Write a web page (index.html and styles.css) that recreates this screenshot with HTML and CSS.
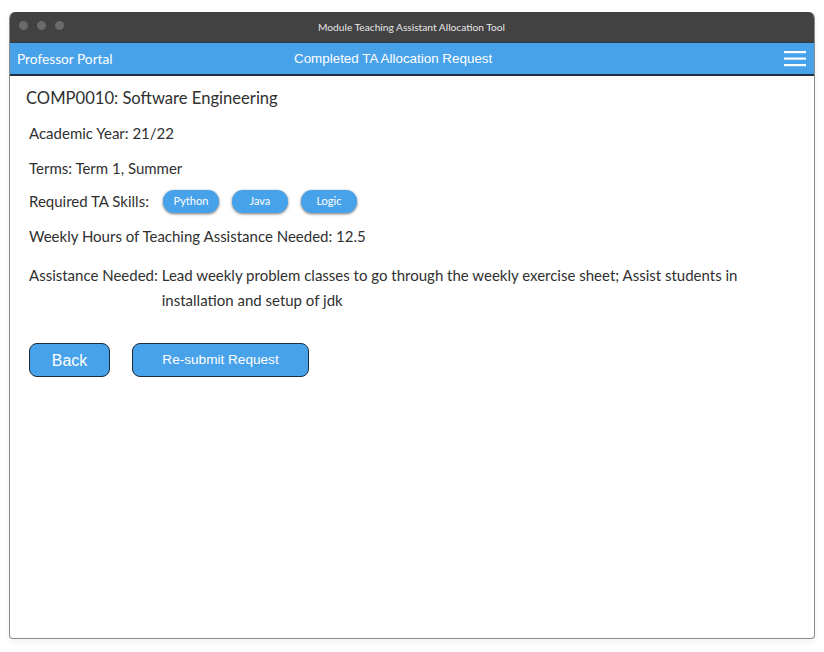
FILE: index.html
```html
<!DOCTYPE html>
<html>
<head>
<meta charset="utf-8">
<link rel="stylesheet" href="styles.css">
</head>
<body>
<div class="window">
  <div class="titlebar">
    <div class="dots"><span class="dot"></span><span class="dot"></span><span class="dot"></span></div>
    <div class="wintitle">Module Teaching Assistant Allocation Tool</div>
  </div>
  <div class="navbar">
    <div class="portal">Professor Portal</div>
    <div class="pagetitle">Completed TA Allocation Request</div>
    <div class="menu">
      <svg width="22" height="16" viewBox="0 0 22 16"><rect x="0" y="0" width="22" height="2.2" fill="#fff"/><rect x="0" y="6.5" width="22" height="2.2" fill="#fff"/><rect x="0" y="13" width="22" height="2.2" fill="#fff"/></svg>
    </div>
  </div>
  <div class="content">
    <h1 class="heading">COMP0010: Software Engineering</h1>
    <div class="row year">Academic Year: 21/22</div>
    <div class="row terms">Terms: Term 1, Summer</div>
    <div class="row skills">
      <span>Required TA Skills:</span>
      <span class="pill">Python</span>
      <span class="pill">Java</span>
      <span class="pill">Logic</span>
    </div>
    <div class="row hours">Weekly Hours of Teaching Assistance Needed: 12.5</div>
    <div class="row assist">
      <span class="label">Assistance Needed:</span>
      <span class="value">Lead weekly problem classes to go through the weekly exercise sheet; Assist students in installation and setup of jdk</span>
    </div>
    <div class="actions">
      <button class="btn back">Back</button>
      <button class="btn resubmit">Re-submit Request</button>
    </div>
  </div>
</div>
</body>
</html>
```

FILE: styles.css
```css
html, body {
  margin: 0;
  padding: 0;
  background: #ffffff;
}
body {
  width: 824px;
  height: 652px;
  overflow: hidden;
  font-family: "Lato", "Open Sans", sans-serif;
  color: #303030;
}
.window {
  margin: 12px 0 0 9px;
  width: 806px;
  height: 627px;
  box-sizing: border-box;
  border: 1px solid #8a8a8a;
  border-top: none;
  border-radius: 6px 6px 4px 4px;
  overflow: hidden;
  display: flex;
  flex-direction: column;
  background: #fff;
  box-shadow: 0 3px 6px rgba(0,0,0,0.06);
}
.titlebar {
  height: 30px;
  background: #424242;
  position: relative;
  display: flex;
  align-items: center;
  justify-content: center;
  flex-shrink: 0;
}
.dots {
  position: absolute;
  left: 9px;
  top: 9px;
  display: flex;
  gap: 9px;
}
.dot {
  width: 9px;
  height: 9px;
  border-radius: 50%;
  background: #6a6a6a;
}
.wintitle {
  color: #e6e6e6;
  font-size: 10.2px;
  font-family: "Lato", sans-serif;
  padding-right: 1px;
}
.navbar {
  height: 31px;
  background: #48a2ea;
  border-top: 1px solid #2a3a4a;
  border-bottom: 2px solid #1e2f42;
  display: flex;
  align-items: center;
  position: relative;
  flex-shrink: 0;
}
.portal {
  color: #fff;
  font-size: 13.7px;
  font-family: "Lato", sans-serif;
  padding-left: 7px;
  width: 277px;
}
.pagetitle {
  color: #fff;
  font-family: "Liberation Sans", Arial, sans-serif;
  font-size: 13.4px;
}
.menu {
  margin-left: auto;
  margin-right: 8px;
  display: flex;
  height: 16px;
}
.content {
  padding: 10px 0 0 16px;
  flex: 1;
}
.heading {
  margin: 0;
  font-weight: 400;
  font-size: 16.6px;
  color: #303030;
  height: 24px;
  line-height: 24px;
}
.row {
  font-size: 15px;
  line-height: 24px;
  margin-left: 3px;
}
.year { margin-top: 11px; }
.terms { margin-top: 11px; }
.skills {
  margin-top: 9px;
  display: flex;
  align-items: center;
}
.pill {
  display: inline-flex;
  align-items: center;
  justify-content: center;
  width: 56px;
  height: 23px;
  background: #48a2ea;
  color: #fff;
  font-size: 11px;
  border-radius: 11px;
  box-shadow: 0 1px 3px rgba(0,0,0,0.55);
  margin-left: 12px;
}
.skills > span:first-child { margin-right: 2px; }
.pill + .pill { margin-left: 13px; }
.hours { margin-top: 11px; }
.assist {
  margin-top: 15px;
  display: flex;
  line-height: 25px;
}
.assist .label { flex-shrink: 0; margin-right: 4px; }
.assist .value { width: 600px; }
.actions {
  margin-top: 30px;
  margin-left: 3px;
  display: flex;
  gap: 22px;
}
.btn {
  background: #48a2ea;
  border: 1.5px solid #1d2a38;
  border-radius: 8px;
  color: #fff;
  font-family: "Liberation Sans", Arial, sans-serif;
  height: 34px;
  padding: 0;
}
.back { width: 81px; font-size: 16px; padding-top: 2px; }
.resubmit { width: 177px; font-size: 13.6px; padding-bottom: 1px; }
```
